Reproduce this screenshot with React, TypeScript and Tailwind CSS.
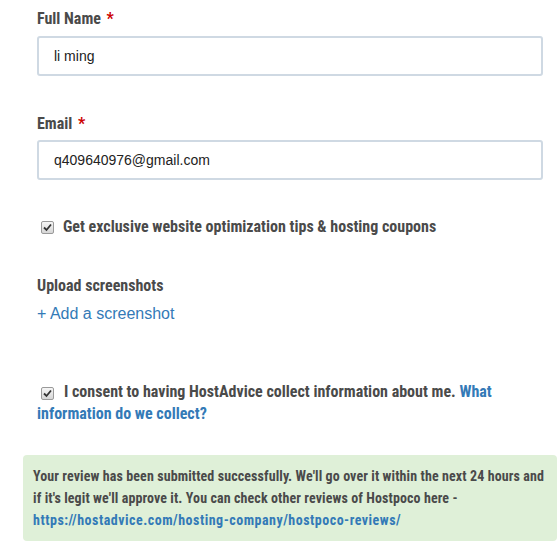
import React from 'react';

const cond = { fontFamily: 'Roboto, sans-serif', fontStretch: '75%' };
const plain = { fontFamily: '"Liberation Sans", Arial, sans-serif' };

function Check() {
    return (
        <span className="flex h-[13px] w-[13px] shrink-0 items-center justify-center rounded-[2px] border border-[#9a9a9a] bg-gradient-to-b from-[#f6f6f6] to-[#d6d6d6]">
            <svg width="9" height="9" viewBox="0 0 9 9">
                <path d="M1 4.5 L3.5 7 L8 1.5" fill="none" stroke="#333" strokeWidth="1.8"/>
            </svg>
        </span>
    );
}

export default function App() {
    return (
        <main className="min-h-screen w-[560px] bg-white" style={cond}>
            <div className="flex flex-col pl-[37px] pr-[17px] pt-[9px]">
                <label className="text-[16px] font-bold leading-5 text-[#4a4a4a]">
                    Full Name <span className="ml-[2px] text-[#c00]">*</span>
                </label>
                <div className="mt-[7px] flex h-[40px] items-center rounded-[3px] border-2 border-[#cfd9e3] pl-[15px] text-[14px] text-[#222]" style={plain}>
                    li ming
                </div>

                <label className="mt-[38px] text-[16px] font-bold leading-5 text-[#4a4a4a]">
                    Email <span className="ml-[2px] text-[#c00]">*</span>
                </label>
                <div className="mt-[6px] flex h-[40px] items-center rounded-[3px] border-2 border-[#cfd9e3] pl-[15px] text-[14px] text-[#222]" style={plain}>
                    q409640976@gmail.com
                </div>

                <div className="mt-[38px] flex items-center gap-[9px] pl-[4px]">
                    <Check/>
                    <p className="text-[16px] font-bold leading-[18px] text-[#4a4a4a]">
                        Get exclusive website optimization tips &amp; hosting coupons
                    </p>
                </div>

                <p className="mt-[40px] text-[16px] font-bold leading-5 text-[#4a4a4a]">Upload screenshots</p>
                <a className="mt-[8px] text-[16px] leading-5 text-[#337ab7]" style={plain}>+ Add a screenshot</a>

                <div className="mt-[57px] pl-[4px] pr-[40px]">
                    <p className="text-[16px] font-bold leading-[22px] text-[#4a4a4a]">
                        <span className="mr-[10px] inline-flex align-[-1px]"><Check/></span>
                        I consent to having HostAdvice collect information about me.{' '}
                        <a className="text-[#337ab7]">What</a>
                    </p>
                </div>
                <a className="text-[16px] font-bold leading-[22px] text-[#337ab7]">information do we collect?</a>
            </div>

            <div className="mr-[3px] ml-[23px] mt-[30px] rounded-[4px] bg-[#dff0d8] px-[10px] pt-[10px] pb-[10px] text-[14px] font-bold leading-[22px] tracking-[0.1px] text-[#4a4a4a]">
                Your review has been submitted successfully. We'll go over it within the next 24 hours and if it's legit we'll approve it. You can check other reviews of Hostpoco here -{' '}
                <a className="tracking-[0.5px] text-[#337ab7]">https://hostadvice.com/hosting-company/hostpoco-reviews/</a>
            </div>
        </main>
    );
}
